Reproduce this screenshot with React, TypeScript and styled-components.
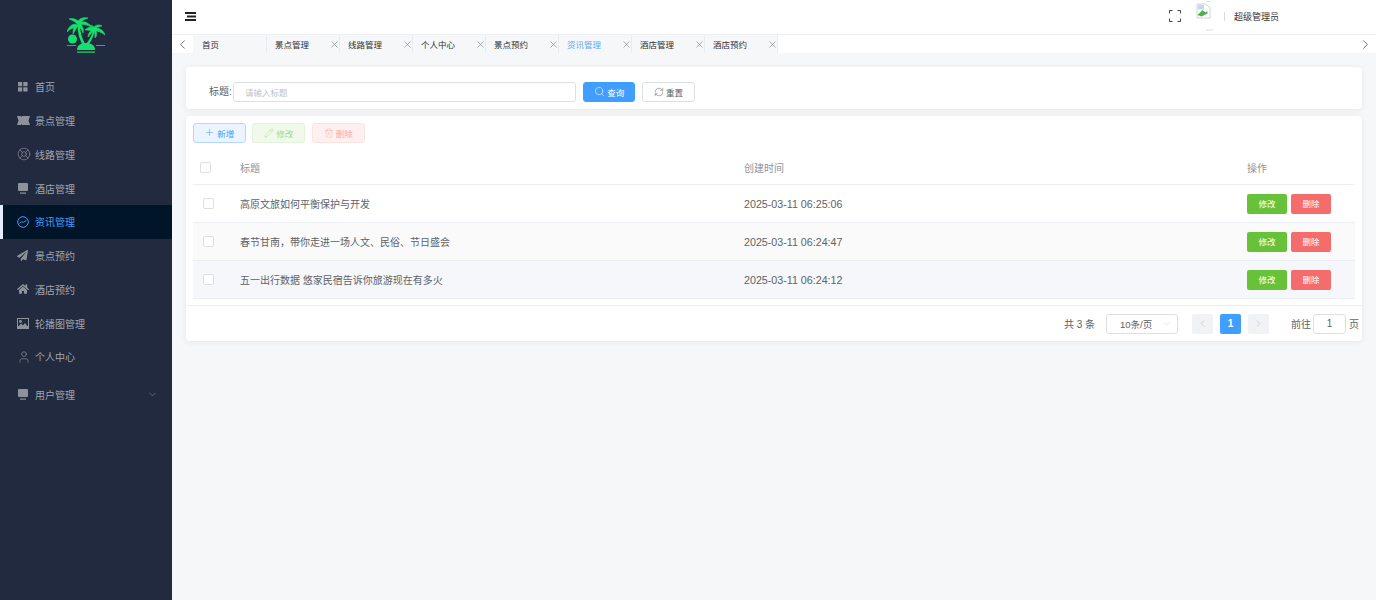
import React from 'react';
import styled, { createGlobalStyle } from 'styled-components';
import { LifeBuoy, User, Search, RefreshCw, Plus, Pencil, Trash2, ChevronLeft, ChevronRight, ChevronDown, X } from 'lucide-react';
import { FaPaperPlane, FaHome } from 'react-icons/fa';

const GlobalStyle = createGlobalStyle`
  html, body { margin: 0; padding: 0; background: #f5f7f9; }
  * { box-sizing: border-box; }
  body { font-family: "Liberation Sans", "Noto Sans CJK SC", sans-serif; }
`;

const Shell = styled.div`
  display: flex;
  min-height: 600px;
`;

const Sidebar = styled.aside`
  width: 172px;
  flex: none;
  background: #222a3f;
`;

const LogoWrap = styled.div`
  height: 70px;
  display: flex;
  justify-content: center;
  padding-top: 17px;
`;

const MenuList = styled.nav`
  display: flex;
  flex-direction: column;
`;

const MenuItem = styled.div<{ $active?: boolean; $tall?: boolean }>`
  height: ${(p) => (p.$tall ? 42 : 33.75)}px;
  display: flex;
  align-items: center;
  padding-left: ${(p) => (p.$active ? 14 : 17)}px;
  padding-right: 14px;
  font-size: 10px;
  color: ${(p) => (p.$active ? '#409eff' : '#a0a6b1')};
  background: ${(p) => (p.$active ? '#001528' : 'transparent')};
  border-left: ${(p) => (p.$active ? '3px solid #e6ecff' : '0')};
`;

const MenuIcon = styled.span<{ $active?: boolean }>`
  width: 18px;
  flex: none;
  display: flex;
  align-items: center;
  color: ${(p) => (p.$active ? '#409eff' : '#8e939b')};
`;

const MenuLabel = styled.span`
  flex: 1;
`;

const Main = styled.div`
  flex: 1;
  min-width: 0;
  display: flex;
  flex-direction: column;
`;

const TopBar = styled.header`
  height: 35px;
  background: #fff;
  border-bottom: 1px solid #eef0f3;
  display: flex;
  align-items: center;
  padding: 0 0 2px 13px;
`;

const TopRight = styled.div`
  margin-left: auto;
  display: flex;
  align-items: center;
  width: 207px;
`;

const AvatarBox = styled.div`
  width: 19px;
  height: 30px;
  margin-left: 15px;
  margin-right: 9px;
  svg { display: block; }
`;

const Divider = styled.span`
  width: 1px;
  height: 9px;
  background: #d8dce2;
  margin-right: 9px;
`;

const UserName = styled.span`
  font-size: 9px;
  color: #303133;
`;

const TabsBar = styled.div`
  height: 18px;
  display: flex;
  background: #f5f7f9;
`;

const ArrowBox = styled.div`
  width: 21px;
  flex: none;
  background: #fff;
  display: flex;
  align-items: center;
  justify-content: center;
  color: #444;
`;

const TabList = styled.div`
  display: flex;
  padding-left: 1px;
`;

const Tab = styled.div<{ $active?: boolean }>`
  width: 73px;
  display: flex;
  align-items: center;
  justify-content: space-between;
  padding: 0 0 0 8px;
  font-size: 8.5px;
  color: ${(p) => (p.$active ? '#66a9ee' : '#303133')};
  border-right: 1px solid #e9ecf0;
  svg { color: #666; margin-right: -1px; flex: none; }
`;

const TabFill = styled.div`
  flex: 1;
  background: #fff;
`;

const Content = styled.main`
  padding: 14px 14px 0;
  display: flex;
  flex-direction: column;
  gap: 7px;
`;

const Card = styled.section`
  background: #fff;
  border-radius: 4px;
  box-shadow: 0 1px 6px rgba(0, 0, 0, 0.07);
`;

const SearchCard = styled(Card)`
  height: 42px;
  display: flex;
  align-items: flex-start;
  gap: 6.8px;
  padding: 15px 0 0 23px;
`;

const FieldLabel = styled.label`
  font-size: 10px;
  line-height: 20px;
  color: #606266;
  margin-right: -6.8px;
  width: 24px;
  white-space: nowrap;
`;

const TextInput = styled.div`
  width: 343px;
  height: 20px;
  border: 1px solid #dcdfe6;
  border-radius: 3px;
  font-size: 8.5px;
  color: #c0c4cc;
  display: flex;
  align-items: center;
  padding: 0 0 1px 11px;
`;

const Btn = styled.button<{ $bg: string; $border: string; $color: string }>`
  width: 52.7px;
  height: 20px;
  padding: 0 0 1px;
  display: inline-flex;
  align-items: center;
  justify-content: center;
  gap: 2px;
  font: inherit;
  font-size: 8.5px;
  border-radius: 3px;
  background: ${(p) => p.$bg};
  border: 1px solid ${(p) => p.$border};
  color: ${(p) => p.$color};
`;

const TableCard = styled(Card)`
  padding: 7px 7px 0;
  height: 225px;
`;

const Toolbar = styled.div`
  display: flex;
  gap: 6.8px;
  height: 27px;
`;

const Row = styled.div<{ $bg?: string; $h: number }>`
  display: grid;
  grid-template-columns: 47px 504px 503px 1fr;
  align-items: center;
  height: ${(p) => p.$h}px;
  background: ${(p) => p.$bg || '#fff'};
  border-bottom: 1px solid #ebeef5;
  font-size: 10px;
  color: #606266;
`;

const CheckCell = styled.div<{ $left: number }>`
  padding-left: ${(p) => p.$left}px;
  display: flex;
`;

const Check = styled.span`
  width: 11px;
  height: 11px;
  border: 1px solid #dcdfe6;
  border-radius: 2px;
  background: #fff;
`;

const HeadText = styled.div`
  color: #909399;
`;

const DateText = styled.div`
  font-size: 10.7px;
`;

const Actions = styled.div`
  display: flex;
  gap: 4px;
`;

const RowBtn = styled.button<{ $bg: string }>`
  width: 40px;
  height: 20px;
  padding: 0 0 1px;
  border: 0;
  border-radius: 2px;
  font: inherit;
  font-size: 8.5px;
  color: #fff;
  background: ${(p) => p.$bg};
`;

const Pager = styled.div`
  margin: 6px -7px 0;
  border-top: 1px solid #ebeef5;
  height: 36px;
  display: flex;
  align-items: center;
  justify-content: flex-end;
  padding-right: 3px;
  font-size: 10px;
  color: #606266;
`;

const PagerSelect = styled.div`
  width: 72px;
  height: 20px;
  margin: 0 14px 0 11px;
  border: 1px solid #dcdfe6;
  border-radius: 3px;
  display: flex;
  align-items: center;
  justify-content: space-between;
  font-size: 9.5px;
  padding: 0 5px 0 13px;
  svg { color: #c0c4cc; }
`;

const PageBtn = styled.div<{ $on?: boolean }>`
  width: 21px;
  height: 20px;
  margin-right: 7px;
  border-radius: 2px;
  display: flex;
  align-items: center;
  justify-content: center;
  font-weight: 700;
  background: ${(p) => (p.$on ? '#409eff' : '#f0f2f5')};
  color: ${(p) => (p.$on ? '#fff' : '#c0c4cc')};
`;

const PagerInput = styled.div`
  width: 33px;
  height: 20px;
  margin: 0 3px 0 2px;
  border: 1px solid #dcdfe6;
  border-radius: 3px;
  display: flex;
  align-items: center;
  justify-content: center;
`;

const JumpText = styled.span`
  margin-left: 15px;
`;

const Logo = () => (
  <svg width="38" height="36" viewBox="0 0 38 36" fill="#16e06c">
    {/* left crown */}
    <path stroke="#16e06c" strokeWidth="0.600" d="M11 8C7 6 2 8 0 15c3-3 5-4 7-4-1 2-1 4-1 6 2-3 3-6 5-8 2 1 4 4 5 7 1-3 0-6-2-8 3-1 7 0 10 2-2-4-6-6-10-5 2-2 4-3 7-4-4-1-8 0-10 3-2-2-5-3-9-2 3 1 7 3 9 6z" />
    {/* right crown */}
    <path stroke="#16e06c" strokeWidth="0.600" d="M28 11c-3-2-7-1-10 2 2 0 4 0 6 1-2 1-3 4-3 6 2-2 3-4 6-6 1 2 1 5 1 7 2-2 2-5 1-7 2 0 5 1 9 4-1-4-5-7-9-7 2-1 4-2 6-2-3-2-6-1-8 1-1-1-3-2-5-2 2 1 4 2 6 3z" />
    {/* trunks */}
    <path d="M10.500 8h2.500c0 7 2 13 5 19h-3c-3-6-4.500-12-4.500-19z" />
    <path d="M26 13h2c-1 5-3 10-6 14h-3c3-4 6-8 7-14z" />
    <circle cx="5.500" cy="22" r="4.500" />
    <path d="M10 33c0-5 4-7 9-7s9 2 9 7z" />
    <rect x="10" y="34.500" width="18" height="1.200" />
    <rect x="0" y="28" width="9" height="0.800" />
    <rect x="29" y="28" width="9" height="0.800" />
  </svg>
);

const Grid = () => (
  <svg width="11" height="11" viewBox="0 0 11 11" fill="currentColor">
    <rect x="1" y="1" width="4.200" height="4.200" />
    <rect x="6.300" y="1" width="4.200" height="4.200" />
    <rect x="1" y="6.300" width="4.200" height="4.200" />
    <rect x="6.300" y="6.300" width="4.200" height="4.200" />
  </svg>
);

const Ticket = () => (
  <svg width="13" height="11" viewBox="0 0 13 11" fill="currentColor">
    <path d="M0 1h4l.6 1 .6-1h7.800l-1.500 4.500L13 10H5.200l-.6-1-.6 1H0l1.500-4.500z" />
  </svg>
);

const Platform = () => (
  <svg width="12" height="11" viewBox="0 0 12 11" fill="currentColor">
    <rect x="1" width="10" height="8" rx="1" />
    <rect x="3" y="9.500" width="6" height="1.200" />
  </svg>
);

const Odometer = () => (
  <svg width="12" height="12" viewBox="0 0 12 12" fill="none" stroke="currentColor" strokeWidth="1">
    <circle cx="6" cy="6" r="5.300" />
    <path d="M2.500 7.500c1-1 2-2 3-1.500s1.500.5 4-2" />
  </svg>
);

const Picture = () => (
  <svg width="12" height="11" viewBox="0 0 12 11" fill="currentColor">
    <path fillRule="evenodd" d="M0 0h12v11H0zM1 1v8h10V1z" />
    <path d="M1 9l3-3.500 2 2 2-2.500 3 4z" />
    <circle cx="3.500" cy="3.500" r="1.400" />
    <rect x="1" y="8" width="10" height="2" />
  </svg>
);

const Fullscreen = () => (
  <svg width="12" height="12" viewBox="0 0 12 12" fill="none" stroke="#444" strokeWidth="1">
    <path d="M0.500 3.500V0.500h3M8.500 0.500h3v3M0.500 8.500v3h3M8.500 11.500h3v-3" />
  </svg>
);

const BrokenImage = () => (
  <svg width="19" height="30" viewBox="0 0 19 30">
    <path d="M1 3h9l4 4v10H1z" fill="#fff" stroke="#c4c7cc" strokeWidth="0.800" />
    <path d="M1.500 14l5-5 3 2.500 2-1.500v2.500l-6 3z" fill="#4caf50" />
    <path d="M2 4h6v4.500H2z" fill="#c8d6f0" />
    <rect x="10" y="28.500" width="7" height="1" fill="#ddd" />
    <rect x="10" y="0" width="5" height="1" fill="#eadfd8" />
  </svg>
);

const Hamburger = () => (
  <svg width="11" height="9" viewBox="0 0 11 9" fill="#222">
    <rect width="11" height="2" />
    <rect x="2" y="3.500" width="9" height="2" />
    <rect y="7" width="11" height="2" />
  </svg>
);

const menus = [
  { label: '首页', icon: <Grid /> },
  { label: '景点管理', icon: <Ticket /> },
  { label: '线路管理', icon: <LifeBuoy size={14} strokeWidth={1.100} /> },
  { label: '酒店管理', icon: <Platform /> },
  { label: '资讯管理', icon: <Odometer />, active: true },
  { label: '景点预约', icon: <FaPaperPlane size={11} /> },
  { label: '酒店预约', icon: <FaHome size={12} /> },
  { label: '轮播图管理', icon: <Picture /> },
  { label: '个人中心', icon: <User size={14} strokeWidth={1.100} /> },
  { label: '用户管理', icon: <Platform />, tall: true, arrow: true },
];

const tabs = ['首页', '景点管理', '线路管理', '个人中心', '景点预约', '资讯管理', '酒店管理', '酒店预约'];

const rows = [
  { title: '高原文旅如何平衡保护与开发', time: '2025-03-11 06:25:06', bg: '#fff' },
  { title: '春节甘南，带你走进一场人文、民俗、节日盛会', time: '2025-03-11 06:24:47', bg: '#fafafa' },
  { title: '五一出行数据 悠家民宿告诉你旅游现在有多火', time: '2025-03-11 06:24:12', bg: '#f5f7fa' },
];

export default function App() {
  return (
    <Shell>
      <GlobalStyle />
      <Sidebar>
        <LogoWrap>
          <Logo />
        </LogoWrap>
        <MenuList>
          {menus.map((m) => (
            <MenuItem key={m.label} $active={m.active} $tall={m.tall}>
              <MenuIcon $active={m.active}>{m.icon}</MenuIcon>
              <MenuLabel>{m.label}</MenuLabel>
              {m.arrow && <ChevronDown size={11} strokeWidth={1} />}
            </MenuItem>
          ))}
        </MenuList>
      </Sidebar>
      <Main>
        <TopBar>
          <Hamburger />
          <TopRight>
            <Fullscreen />
            <AvatarBox>
              <BrokenImage />
            </AvatarBox>
            <Divider />
            <UserName>超级管理员</UserName>
          </TopRight>
        </TopBar>
        <TabsBar>
          <ArrowBox>
            <ChevronLeft size={15} strokeWidth={1.200} />
          </ArrowBox>
          <TabList>
            {tabs.map((t, i) => (
              <Tab key={t} $active={t === '资讯管理'}>
                <span>{t}</span>
                {i > 0 && <X size={11} strokeWidth={1.100} />}
              </Tab>
            ))}
          </TabList>
          <TabFill />
          <ArrowBox>
            <ChevronRight size={15} strokeWidth={1.200} />
          </ArrowBox>
        </TabsBar>
        <Content>
          <SearchCard>
            <FieldLabel>标题:</FieldLabel>
            <TextInput>请输入标题</TextInput>
            <Btn $bg="#409eff" $border="#409eff" $color="#fff">
              <Search size={11} strokeWidth={1.200} />
              查询
            </Btn>
            <Btn $bg="#fff" $border="#dcdfe6" $color="#606266">
              <RefreshCw size={10} strokeWidth={1.200} />
              重置
            </Btn>
          </SearchCard>
          <TableCard>
            <Toolbar>
              <Btn $bg="#ecf5ff" $border="#b3d8ff" $color="#409eff">
                <Plus size={11} strokeWidth={1.100} />
                新增
              </Btn>
              <Btn $bg="#f0f9eb" $border="#e1f3d8" $color="#a4da89">
                <Pencil size={10} strokeWidth={1.100} />
                修改
              </Btn>
              <Btn $bg="#fef0f0" $border="#fde2e2" $color="#f9a7a7">
                <Trash2 size={10} strokeWidth={1.100} />
                删除
              </Btn>
            </Toolbar>
            <Row $h={35}>
              <CheckCell $left={7}>
                <Check />
              </CheckCell>
              <HeadText>标题</HeadText>
              <HeadText>创建时间</HeadText>
              <HeadText>操作</HeadText>
            </Row>
            {rows.map((r) => (
              <Row key={r.time} $h={38} $bg={r.bg}>
                <CheckCell $left={10}>
                  <Check />
                </CheckCell>
                <div>{r.title}</div>
                <DateText>{r.time}</DateText>
                <Actions>
                  <RowBtn $bg="#67c23a">修改</RowBtn>
                  <RowBtn $bg="#f56c6c">删除</RowBtn>
                </Actions>
              </Row>
            ))}
            <Pager>
              <span>共 3 条</span>
              <PagerSelect>
                <span>10条/页</span>
                <ChevronDown size={10} strokeWidth={1} />
              </PagerSelect>
              <PageBtn>
                <ChevronLeft size={11} strokeWidth={1.500} />
              </PageBtn>
              <PageBtn $on>1</PageBtn>
              <PageBtn>
                <ChevronRight size={11} strokeWidth={1.500} />
              </PageBtn>
              <JumpText>前往</JumpText>
              <PagerInput>1</PagerInput>
              <span>页</span>
            </Pager>
          </TableCard>
        </Content>
      </Main>
    </Shell>
  );
}
